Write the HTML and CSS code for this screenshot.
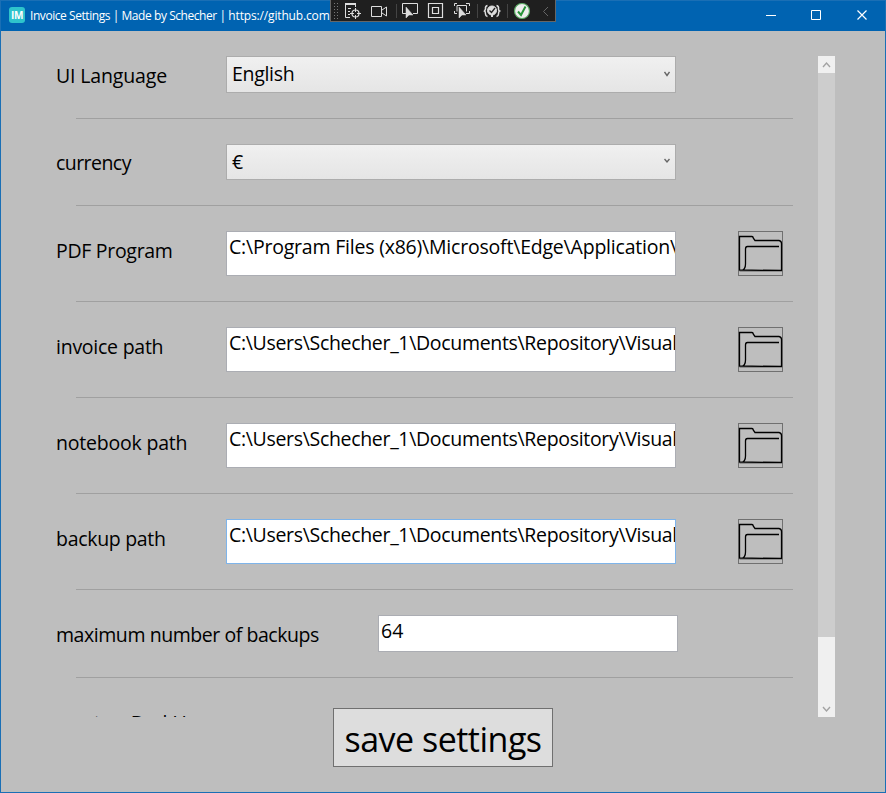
FILE: index.html
```html
<!DOCTYPE html>
<html lang="en">
<head>
<meta charset="utf-8">
<title>Invoice Settings</title>
<link rel="stylesheet" href="styles.css">
</head>
<body>
<svg class="defs" width="0" height="0">
  <symbol id="folder" viewBox="0 0 45 45">
    <path d="M1.500 39V5.500H14Q15 5.500 15.500 7.500L17 9.500H41Q43.500 10 43.500 12.500V39.500Z M41 15.500H9.500Q7.500 15.500 7.500 18V33Q7.500 38.500 3.500 39.500M1.500 39.500H43.500" fill="none" stroke="#000" stroke-width="1.300"/>
  </symbol>
</svg>
<div class="window">
  <header class="titlebar">
    <span class="logo">IM</span>
    <span class="title">Invoice Settings | Made by Schecher | <span class="url">https://github.com</span></span>
    <div class="caption">
      <svg width="46" height="30"><path d="M11 14.500H21" stroke="#fff"/></svg>
      <svg width="46" height="30"><path d="M10.500 9.500H19.500V18.500H10.500Z" fill="none" stroke="#fff"/></svg>
      <svg width="38" height="30"><path d="M10.500 9.500L19.500 18.500M19.500 9.500L10.500 18.500" stroke="#fff" stroke-width="1.200"/></svg>
    </div>
    <div class="debugbar">
      <svg class="grip" width="12" height="20"><path d="M3.500 2V19M6.500 2V19" stroke="#777" stroke-dasharray="1 2"/></svg>
      <svg width="25" height="20" fill="none" stroke="#ddd"><path d="M2 3H13" stroke-width="2"/><path d="M2.500 3V16.500H7M12.500 4V6M5 7.500H8M5 10.500H7M5 13.500H7"/><circle cx="12.500" cy="12.500" r="3.500" stroke-width="1.200"/><path d="M12.500 7V11M12.500 14V18M7 12.500H11M14 12.500H18"/></svg>
      <svg width="28" height="20" fill="none" stroke="#ddd"><path d="M3.500 5.500H13.500V15.500H3.500ZM14 9L18.500 6V15L14 12"/></svg>
      <i></i>
      <svg width="26" height="20" fill="none" stroke="#ddd"><path d="M9 12.500H5.500V2.500H20.500V12.500H16"/><path d="M9 6V17L12 14H16Z" fill="#ddd" stroke-width="0.500"/></svg>
      <svg width="26" height="20" fill="none" stroke="#ddd"><path d="M5.500 2.500H19.500V16.500H5.500ZM9.500 6.500H15.500V12.500H9.500Z" stroke-width="1.200"/></svg>
      <svg width="28" height="20" fill="none" stroke="#ddd"><path d="M5.500 5V2.500H8M17 2.500H20.500V5M5.500 10V12.500H8M20.500 10V12.500H17M8 10.500V4.500H17.500V10.500"/><path d="M10 6V17L13 14H17Z" fill="#ddd" stroke-width="0.500"/></svg>
      <i></i>
      <svg width="29" height="20" fill="none" stroke="#ddd"><path d="M9.500 4.500Q7 5 7.500 8Q7 9.500 6.500 10Q7.500 10.500 7.500 13Q7.500 15 9.500 15.500M18.500 4.500Q21 5 20.500 8Q20.500 9.500 21.500 10Q20.500 10.500 20.500 13Q20.500 15 18.500 15.500" stroke-width="1.500"/><circle cx="14" cy="9.500" r="4.500" fill="#ddd"/><path d="M14 13V16" stroke-width="2"/><path d="M11.500 9.500L13.500 11.500L17 7" stroke="#222" stroke-width="1.300"/></svg>
      <i></i>
      <svg width="31" height="20" fill="none"><circle cx="14" cy="10" r="7.500" fill="#eee" stroke="#5bad65" stroke-width="1.200"/><path d="M10 10.500L13 14L17.500 5.500" stroke="#269438" stroke-width="2"/></svg>
      <svg width="14" height="20"><path d="M9 6L4.500 10.500L9 15" fill="none" stroke="#666"/></svg>
    </div>
  </header>
  <main>
    <div class="scroller">
      <div class="content">
        <section class="row"><label class="t-lang">UI Language</label><div class="combo"><span class="t-english">English</span><svg width="6" height="6"><path d="M0.500 1L3 4.500L5.500 1" fill="none" stroke="#666" stroke-width="1.400"/></svg></div></section>
        <hr>
        <section class="row short"><label class="t-currency">currency</label><div class="combo"><span>€</span><svg width="6" height="6"><path d="M0.500 1L3 4L5.500 1" fill="none" stroke="#666" stroke-width="1.400"/></svg></div></section>
        <hr>
        <section class="row tall"><label class="t-pdf">PDF Program</label><div class="field"><span class="t-edge">C:\Program Files (x86)\Microsoft\Edge\Application\</span></div><button class="browse"><svg><use href="#folder"/></svg></button></section>
        <hr>
        <section class="row tall"><label class="t-invoice">invoice path</label><div class="field"><span class="t-path">C:\Users\Schecher_1\Documents\Repository\Visual</span></div><button class="browse"><svg><use href="#folder"/></svg></button></section>
        <hr>
        <section class="row tall"><label class="t-note">notebook path</label><div class="field"><span class="t-path">C:\Users\Schecher_1\Documents\Repository\Visual</span></div><button class="browse"><svg><use href="#folder"/></svg></button></section>
        <hr>
        <section class="row tall"><label class="t-backup">backup path</label><div class="field focus"><span class="t-path">C:\Users\Schecher_1\Documents\Repository\Visual</span></div><button class="browse"><svg><use href="#folder"/></svg></button></section>
        <hr>
        <section class="row wide"><label class="t-max">maximum number of backups</label><div class="field number"><span>64</span></div></section>
        <hr>
        <section class="row wide"><label class="t-create">create a BackUp</label></section>
      </div>
      <div class="scrollbar">
        <svg width="17" height="17"><path d="M5 11L8.500 7L12 11" fill="none" stroke="#a3a3a3" stroke-width="1.400"/></svg>
        <div class="thumb"></div>
        <div class="track"></div>
        <svg width="17" height="17"><path d="M5 7L8.500 11L12 7" fill="none" stroke="#a3a3a3" stroke-width="1.400"/></svg>
      </div>
    </div>
    <button class="save"><span>save settings</span></button>
  </main>
</div>
</body>
</html>
```
FILE: styles.css
```css
* { box-sizing: border-box; }
body { margin: 0; font-family: "Open Sans", "Noto Sans", sans-serif; color: #000; overflow: hidden; }
.defs { position: absolute; }
.window { width: 886px; height: 793px; border: 1px solid #1a6fb5; background: #bebebe; display: flex; flex-direction: column; }
.titlebar { position: relative; height: 30px; background: #0063b1; color: #fff; display: flex; align-items: center; padding-left: 8px; flex: none; }
.logo { width: 16px; height: 16px; margin-top: -2px; border-radius: 3px; background: #2ec4cc; font: bold 10px/16px "Open Sans", sans-serif; text-align: center; letter-spacing: -0.3px; flex: none; }
.title { margin-left: 5px; font-size: 12px; line-height: 30px; letter-spacing: -0.44px; white-space: nowrap; }
.url { letter-spacing: -0.15px; }
.caption { margin-left: auto; display: flex; }
.caption svg { display: block; }
.debugbar { position: absolute; left: 329px; top: -1px; width: 226px; height: 22px; background: #1f1f1f; border: 1px solid #666; border-top: 0; display: flex; align-items: center; }
.debugbar svg { flex: none; margin-top: 1px; }
.debugbar i { width: 1px; height: 14px; background: #444; flex: none; }
main { flex: 1; padding-top: 25px; display: flex; flex-direction: column; align-items: center; }
.scroller { width: 779px; height: 661px; margin-left: 5px; display: flex; flex: none; overflow: hidden; }
.content { width: 762px; font-size: 19.500px; white-space: nowrap; }
.row { display: flex; height: 37px; }
.row.short { height: 36px; }
.row.tall { height: 45px; }
.row label { width: 170px; flex: none; line-height: 27px; padding-top: 6px; }
.row.short label { padding-top: 5px; }
.row.wide label { width: 322px; }
.t-lang { letter-spacing: -0.15px; }
.t-currency { letter-spacing: -0.55px; }
.t-pdf { letter-spacing: -0.3px; }
.t-invoice { letter-spacing: -0.25px; }
.t-note { letter-spacing: -0.2px; }
.t-backup { letter-spacing: -0.3px; }
.t-max { letter-spacing: -0.44px; }
.t-create { letter-spacing: -0.35px; }
.t-english { letter-spacing: -0.3px; }
.t-edge { letter-spacing: -0.21px; }
.t-path { letter-spacing: -0.32px; }
hr { margin: 25px 25px 25px 20px; border: 0; height: 1px; background: #a0a0a0; }
.combo { width: 450px; border: 1px solid #acacac; background: linear-gradient(#f0f0f0, #e5e5e5); display: flex; align-items: center; justify-content: space-between; padding: 0 5px 1px; line-height: 30px; }
.combo svg { margin-top: -1px; }
.field { width: 450px; border: 1px solid #abadb3; background: #fff; overflow: hidden; padding-left: 2px; line-height: 30px; }
.field.focus { border-color: #7eb4ea; }
.field.number { width: 300px; }
.browse { width: 45px; height: 45px; margin: 0 0 0 62px; padding: 0; border: 1px solid #707070; background: none; }
.browse svg { display: block; width: 45px; height: 45px; margin: -1px; }
.scrollbar { width: 17px; background: #f0f0f0; display: flex; flex-direction: column; }
.scrollbar svg { display: block; flex: none; }
.thumb { height: 564px; background: #cdcdcd; }
.track { flex: 1; }
.save { width: 220px; height: 59px; margin-top: -9px; border: 1px solid #707070; background: #ddd; color: #000; font: 34px/54px "Open Sans", sans-serif; letter-spacing: -0.5px; padding: 3px 0 0; white-space: nowrap; }
```
